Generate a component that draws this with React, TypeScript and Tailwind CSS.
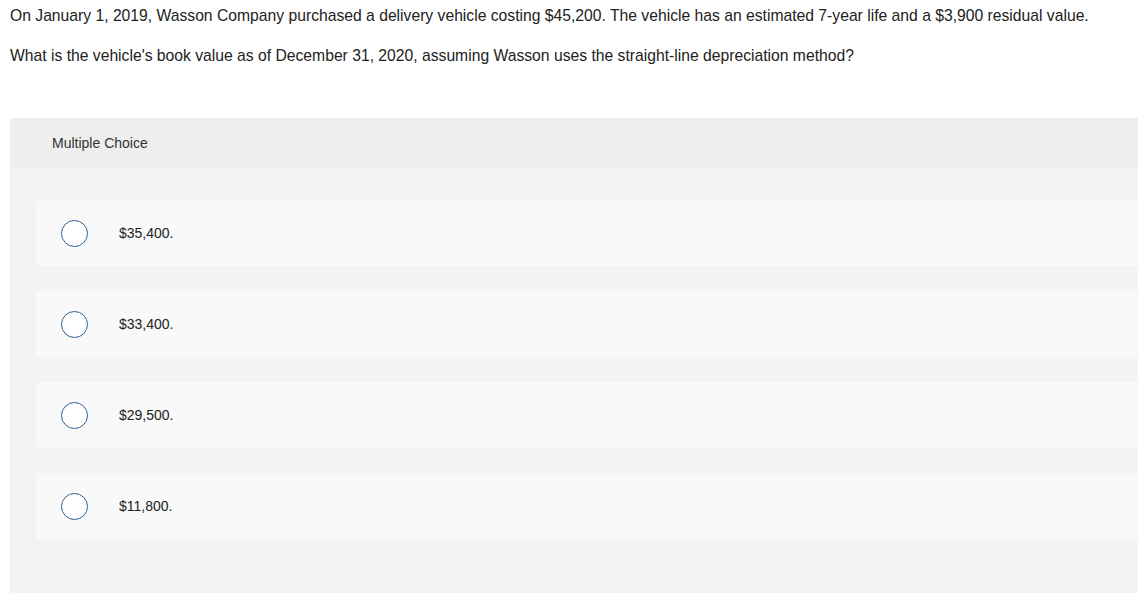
const choices = ["$35,400.", "$33,400.", "$29,500.", "$11,800."];

export default function App() {
  return (
    <div className="min-h-[600px] bg-white font-['Liberation_Sans',Arial,sans-serif] text-[#222]">
      <div className="px-[10px] pt-[6px]">
        <p className="text-[15.7px] leading-[20px]">
          On January 1, 2019, Wasson Company purchased a delivery vehicle costing $45,200. The vehicle has an estimated
          7-year life and a $3,900 residual value.
        </p>
        <p className="mt-[20px] text-[15.7px] leading-[20px]">
          What is the vehicle's book value as of December 31, 2020, assuming Wasson uses the straight-line depreciation
          method?
        </p>
      </div>

      <div className="ml-[10px] mt-[52px] rounded-l-[3px] bg-[#f3f3f3]">
        <div className="flex h-[50px] items-center rounded-tl-[3px] bg-[#eeeeee] pl-[42px] text-[14px] text-[#333]">
          Multiple Choice
        </div>
        <div className="flex flex-col gap-[25px] pb-[54px] pl-[26px] pt-[32px]">
          {choices.map((c) => (
            <div key={c} className="flex h-[66px] items-center rounded-l-[4px] bg-[#f9f9f9]">
              <span className="ml-[25px] h-[27px] w-[27px] rounded-full border border-[#2d5f93] bg-white" />
              <span className="ml-[31px] text-[14px] text-[#222]">{c}</span>
            </div>
          ))}
        </div>
      </div>
    </div>
  );
}
